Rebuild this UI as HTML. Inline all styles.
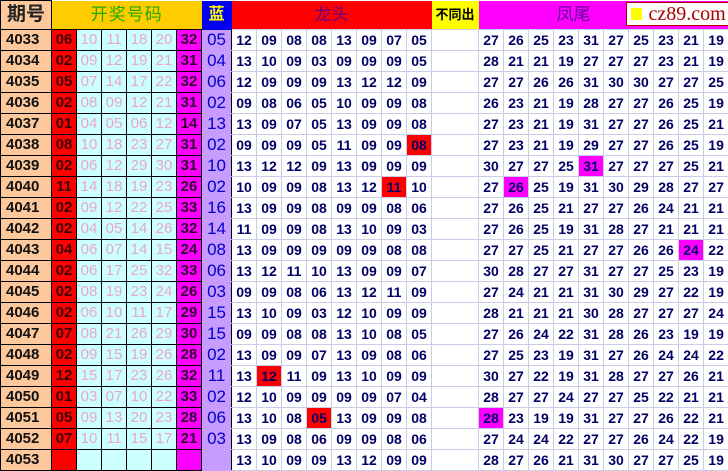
<!DOCTYPE html>
<html><head><meta charset="utf-8"><style>
*{margin:0;padding:0;box-sizing:border-box}
body{width:728px;height:470px;overflow:hidden;background:#fff;font-family:"Liberation Sans","Noto Sans CJK SC",sans-serif}
table{border-collapse:collapse;table-layout:fixed;width:728px}
td{height:21px;text-align:center;font-size:14px;padding:0;line-height:20px;white-space:nowrap;overflow:hidden}
tr.h td{height:29px;font-size:17px;font-weight:bold}
td.n{background:#fcc89c;border:1px solid #000;text-align:left;padding-left:5px;font-weight:bold;color:#111;font-size:15px}
td.r{background:#f00;border:1px solid #000;color:#3a0000;font-size:15px;font-weight:bold}
td.c{background:#ccffff;border:1px solid #000;color:#eaa6c8;font-size:15px}
td.m{background:#f0f;border:1px solid #000;color:#330033;font-size:15px;font-weight:bold}
td.b{background:#c89cff;color:#0000cc;font-size:17px;border-bottom:1px solid #c89cff;border-right:1px solid #000}
td.l,td.f{border:1px solid #c8cce8;color:#000066;font-weight:bold;font-size:14px}
td.x{border:1px solid #c8cce8}
td.lr{background:#f00}
td.fm{background:#f0f}
</style></head><body>
<table>
<colgroup><col style="width:51px"><col style="width:25px"><col style="width:25px"><col style="width:25px"><col style="width:25px"><col style="width:25px"><col style="width:25px"><col style="width:30px"><col style="width:25px"><col style="width:25px"><col style="width:25px"><col style="width:25px"><col style="width:25px"><col style="width:25px"><col style="width:25px"><col style="width:25px"><col style="width:47px"><col style="width:25px"><col style="width:25px"><col style="width:25px"><col style="width:25px"><col style="width:25px"><col style="width:25px"><col style="width:25px"><col style="width:25px"><col style="width:25px"><col style="width:25px"></colgroup>
<tr class="h">
<td style="background:#fcc89c;color:#222;font-size:19px;border:1px solid #000">期号</td>
<td colspan="6" style="background:#ffcc00;color:#22aa00;font-weight:normal;letter-spacing:1px">开奖号码</td>
<td style="background:#0000ee;color:#ffff00;font-size:16px">蓝</td>
<td colspan="8" style="background:#ff0000;color:#660088;font-weight:normal">龙头</td>
<td style="background:#ffff00;color:#000;font-size:13px">不同出</td>
<td colspan="10" style="background:#ff00ff;color:#660099;font-weight:normal;position:relative;text-align:left;padding-left:78px">凤尾<div style="position:absolute;left:147px;top:1px;width:104px;height:24px;background:#fff;border:1px solid #aa0000;font-family:'Liberation Serif',serif;font-weight:normal;color:#aa0000;font-size:20px;line-height:22px;padding-left:22px">cz89.com<span style="position:absolute;left:4px;top:5px;width:11px;height:12px;background:#ffff00"></span></div></td>
</tr>
<tr><td class="n">4033</td><td class="r">06</td><td class="c">10</td><td class="c">11</td><td class="c">18</td><td class="c">20</td><td class="m">32</td><td class="b">05</td><td class="l">12</td><td class="l">09</td><td class="l">08</td><td class="l">08</td><td class="l">13</td><td class="l">09</td><td class="l">07</td><td class="l">05</td><td class="x"></td><td class="f">27</td><td class="f">26</td><td class="f">25</td><td class="f">23</td><td class="f">31</td><td class="f">27</td><td class="f">25</td><td class="f">23</td><td class="f">21</td><td class="f">19</td></tr>
<tr><td class="n">4034</td><td class="r">02</td><td class="c">09</td><td class="c">12</td><td class="c">19</td><td class="c">21</td><td class="m">31</td><td class="b">04</td><td class="l">13</td><td class="l">10</td><td class="l">09</td><td class="l">03</td><td class="l">09</td><td class="l">09</td><td class="l">09</td><td class="l">05</td><td class="x"></td><td class="f">28</td><td class="f">21</td><td class="f">21</td><td class="f">19</td><td class="f">27</td><td class="f">27</td><td class="f">27</td><td class="f">23</td><td class="f">21</td><td class="f">19</td></tr>
<tr><td class="n">4035</td><td class="r">05</td><td class="c">07</td><td class="c">14</td><td class="c">17</td><td class="c">22</td><td class="m">32</td><td class="b">06</td><td class="l">12</td><td class="l">09</td><td class="l">09</td><td class="l">09</td><td class="l">13</td><td class="l">12</td><td class="l">12</td><td class="l">09</td><td class="x"></td><td class="f">27</td><td class="f">27</td><td class="f">26</td><td class="f">26</td><td class="f">31</td><td class="f">30</td><td class="f">30</td><td class="f">27</td><td class="f">27</td><td class="f">25</td></tr>
<tr><td class="n">4036</td><td class="r">02</td><td class="c">08</td><td class="c">09</td><td class="c">12</td><td class="c">21</td><td class="m">31</td><td class="b">02</td><td class="l">09</td><td class="l">08</td><td class="l">06</td><td class="l">05</td><td class="l">10</td><td class="l">09</td><td class="l">09</td><td class="l">08</td><td class="x"></td><td class="f">26</td><td class="f">23</td><td class="f">21</td><td class="f">19</td><td class="f">28</td><td class="f">27</td><td class="f">27</td><td class="f">26</td><td class="f">25</td><td class="f">19</td></tr>
<tr><td class="n">4037</td><td class="r">01</td><td class="c">04</td><td class="c">05</td><td class="c">06</td><td class="c">12</td><td class="m">14</td><td class="b">13</td><td class="l">13</td><td class="l">09</td><td class="l">07</td><td class="l">05</td><td class="l">13</td><td class="l">09</td><td class="l">09</td><td class="l">08</td><td class="x"></td><td class="f">27</td><td class="f">23</td><td class="f">21</td><td class="f">19</td><td class="f">31</td><td class="f">27</td><td class="f">27</td><td class="f">26</td><td class="f">25</td><td class="f">21</td></tr>
<tr><td class="n">4038</td><td class="r">08</td><td class="c">10</td><td class="c">18</td><td class="c">23</td><td class="c">27</td><td class="m">31</td><td class="b">02</td><td class="l">09</td><td class="l">09</td><td class="l">09</td><td class="l">05</td><td class="l">11</td><td class="l">09</td><td class="l">09</td><td class="l lr">08</td><td class="x"></td><td class="f">27</td><td class="f">23</td><td class="f">21</td><td class="f">19</td><td class="f">29</td><td class="f">27</td><td class="f">27</td><td class="f">26</td><td class="f">25</td><td class="f">19</td></tr>
<tr><td class="n">4039</td><td class="r">02</td><td class="c">06</td><td class="c">12</td><td class="c">29</td><td class="c">30</td><td class="m">31</td><td class="b">10</td><td class="l">13</td><td class="l">12</td><td class="l">12</td><td class="l">09</td><td class="l">13</td><td class="l">09</td><td class="l">09</td><td class="l">09</td><td class="x"></td><td class="f">30</td><td class="f">27</td><td class="f">27</td><td class="f">25</td><td class="f fm">31</td><td class="f">27</td><td class="f">27</td><td class="f">27</td><td class="f">25</td><td class="f">21</td></tr>
<tr><td class="n">4040</td><td class="r">11</td><td class="c">14</td><td class="c">18</td><td class="c">19</td><td class="c">23</td><td class="m">26</td><td class="b">02</td><td class="l">10</td><td class="l">09</td><td class="l">09</td><td class="l">08</td><td class="l">13</td><td class="l">12</td><td class="l lr">11</td><td class="l">10</td><td class="x"></td><td class="f">27</td><td class="f fm">26</td><td class="f">25</td><td class="f">19</td><td class="f">31</td><td class="f">30</td><td class="f">29</td><td class="f">28</td><td class="f">27</td><td class="f">27</td></tr>
<tr><td class="n">4041</td><td class="r">02</td><td class="c">09</td><td class="c">12</td><td class="c">22</td><td class="c">25</td><td class="m">33</td><td class="b">16</td><td class="l">13</td><td class="l">09</td><td class="l">09</td><td class="l">08</td><td class="l">09</td><td class="l">09</td><td class="l">08</td><td class="l">06</td><td class="x"></td><td class="f">27</td><td class="f">26</td><td class="f">25</td><td class="f">21</td><td class="f">27</td><td class="f">27</td><td class="f">26</td><td class="f">24</td><td class="f">21</td><td class="f">21</td></tr>
<tr><td class="n">4042</td><td class="r">02</td><td class="c">04</td><td class="c">05</td><td class="c">14</td><td class="c">26</td><td class="m">32</td><td class="b">14</td><td class="l">11</td><td class="l">09</td><td class="l">09</td><td class="l">08</td><td class="l">13</td><td class="l">10</td><td class="l">09</td><td class="l">03</td><td class="x"></td><td class="f">27</td><td class="f">26</td><td class="f">25</td><td class="f">19</td><td class="f">31</td><td class="f">28</td><td class="f">27</td><td class="f">21</td><td class="f">21</td><td class="f">21</td></tr>
<tr><td class="n">4043</td><td class="r">04</td><td class="c">06</td><td class="c">07</td><td class="c">14</td><td class="c">15</td><td class="m">24</td><td class="b">08</td><td class="l">13</td><td class="l">09</td><td class="l">09</td><td class="l">09</td><td class="l">09</td><td class="l">09</td><td class="l">08</td><td class="l">08</td><td class="x"></td><td class="f">27</td><td class="f">27</td><td class="f">25</td><td class="f">21</td><td class="f">27</td><td class="f">27</td><td class="f">26</td><td class="f">26</td><td class="f fm">24</td><td class="f">22</td></tr>
<tr><td class="n">4044</td><td class="r">02</td><td class="c">06</td><td class="c">17</td><td class="c">25</td><td class="c">32</td><td class="m">33</td><td class="b">06</td><td class="l">13</td><td class="l">12</td><td class="l">11</td><td class="l">10</td><td class="l">13</td><td class="l">09</td><td class="l">09</td><td class="l">07</td><td class="x"></td><td class="f">30</td><td class="f">28</td><td class="f">27</td><td class="f">27</td><td class="f">31</td><td class="f">27</td><td class="f">27</td><td class="f">25</td><td class="f">23</td><td class="f">19</td></tr>
<tr><td class="n">4045</td><td class="r">02</td><td class="c">08</td><td class="c">19</td><td class="c">23</td><td class="c">24</td><td class="m">26</td><td class="b">03</td><td class="l">09</td><td class="l">09</td><td class="l">08</td><td class="l">06</td><td class="l">13</td><td class="l">12</td><td class="l">11</td><td class="l">09</td><td class="x"></td><td class="f">27</td><td class="f">24</td><td class="f">21</td><td class="f">21</td><td class="f">31</td><td class="f">30</td><td class="f">29</td><td class="f">27</td><td class="f">22</td><td class="f">19</td></tr>
<tr><td class="n">4046</td><td class="r">02</td><td class="c">06</td><td class="c">10</td><td class="c">11</td><td class="c">17</td><td class="m">29</td><td class="b">15</td><td class="l">13</td><td class="l">10</td><td class="l">09</td><td class="l">03</td><td class="l">12</td><td class="l">10</td><td class="l">09</td><td class="l">09</td><td class="x"></td><td class="f">28</td><td class="f">21</td><td class="f">21</td><td class="f">21</td><td class="f">30</td><td class="f">28</td><td class="f">27</td><td class="f">27</td><td class="f">27</td><td class="f">24</td></tr>
<tr><td class="n">4047</td><td class="r">07</td><td class="c">08</td><td class="c">21</td><td class="c">26</td><td class="c">29</td><td class="m">30</td><td class="b">15</td><td class="l">09</td><td class="l">09</td><td class="l">08</td><td class="l">08</td><td class="l">13</td><td class="l">10</td><td class="l">08</td><td class="l">05</td><td class="x"></td><td class="f">27</td><td class="f">26</td><td class="f">24</td><td class="f">22</td><td class="f">31</td><td class="f">28</td><td class="f">26</td><td class="f">23</td><td class="f">19</td><td class="f">19</td></tr>
<tr><td class="n">4048</td><td class="r">02</td><td class="c">09</td><td class="c">15</td><td class="c">19</td><td class="c">26</td><td class="m">28</td><td class="b">02</td><td class="l">13</td><td class="l">09</td><td class="l">09</td><td class="l">07</td><td class="l">13</td><td class="l">09</td><td class="l">08</td><td class="l">06</td><td class="x"></td><td class="f">27</td><td class="f">25</td><td class="f">23</td><td class="f">19</td><td class="f">31</td><td class="f">27</td><td class="f">26</td><td class="f">24</td><td class="f">24</td><td class="f">22</td></tr>
<tr><td class="n">4049</td><td class="r">12</td><td class="c">15</td><td class="c">17</td><td class="c">23</td><td class="c">26</td><td class="m">32</td><td class="b">11</td><td class="l">13</td><td class="l lr">12</td><td class="l">11</td><td class="l">09</td><td class="l">13</td><td class="l">10</td><td class="l">09</td><td class="l">09</td><td class="x"></td><td class="f">30</td><td class="f">27</td><td class="f">22</td><td class="f">19</td><td class="f">31</td><td class="f">28</td><td class="f">27</td><td class="f">27</td><td class="f">26</td><td class="f">21</td></tr>
<tr><td class="n">4050</td><td class="r">01</td><td class="c">03</td><td class="c">07</td><td class="c">10</td><td class="c">22</td><td class="m">33</td><td class="b">02</td><td class="l">12</td><td class="l">10</td><td class="l">09</td><td class="l">09</td><td class="l">09</td><td class="l">09</td><td class="l">07</td><td class="l">04</td><td class="x"></td><td class="f">28</td><td class="f">27</td><td class="f">27</td><td class="f">24</td><td class="f">27</td><td class="f">27</td><td class="f">25</td><td class="f">22</td><td class="f">21</td><td class="f">21</td></tr>
<tr><td class="n">4051</td><td class="r">05</td><td class="c">09</td><td class="c">13</td><td class="c">20</td><td class="c">23</td><td class="m">28</td><td class="b">06</td><td class="l">13</td><td class="l">10</td><td class="l">08</td><td class="l lr">05</td><td class="l">13</td><td class="l">09</td><td class="l">09</td><td class="l">08</td><td class="x"></td><td class="f fm">28</td><td class="f">23</td><td class="f">19</td><td class="f">19</td><td class="f">31</td><td class="f">27</td><td class="f">27</td><td class="f">26</td><td class="f">22</td><td class="f">21</td></tr>
<tr><td class="n">4052</td><td class="r">07</td><td class="c">10</td><td class="c">11</td><td class="c">15</td><td class="c">17</td><td class="m">21</td><td class="b">03</td><td class="l">13</td><td class="l">09</td><td class="l">08</td><td class="l">06</td><td class="l">09</td><td class="l">09</td><td class="l">08</td><td class="l">06</td><td class="x"></td><td class="f">27</td><td class="f">24</td><td class="f">24</td><td class="f">22</td><td class="f">27</td><td class="f">27</td><td class="f">26</td><td class="f">24</td><td class="f">22</td><td class="f">19</td></tr>
<tr><td class="n">4053</td><td class="r"></td><td class="c"></td><td class="c"></td><td class="c"></td><td class="c"></td><td class="m"></td><td class="b"></td><td class="l">13</td><td class="l">10</td><td class="l">09</td><td class="l">09</td><td class="l">13</td><td class="l">12</td><td class="l">09</td><td class="l">09</td><td class="x"></td><td class="f">28</td><td class="f">27</td><td class="f">26</td><td class="f">21</td><td class="f">31</td><td class="f">30</td><td class="f">27</td><td class="f">27</td><td class="f">25</td><td class="f">19</td></tr>
</table>
</body></html>
